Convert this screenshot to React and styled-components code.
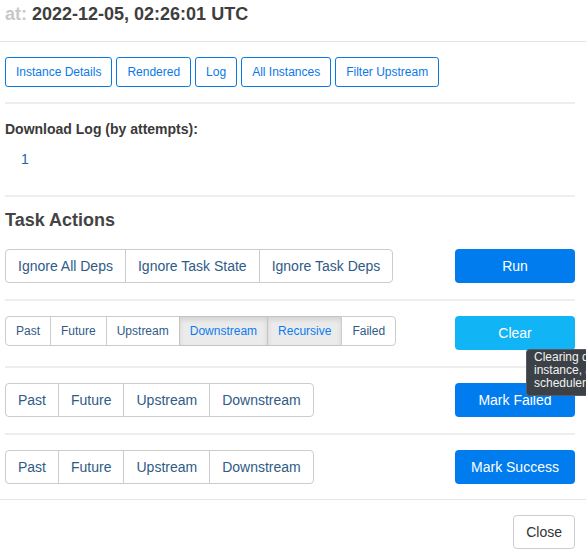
import React from "react";
import styled, { createGlobalStyle, css } from "styled-components";

const GlobalStyle = createGlobalStyle`
  html, body {
    margin: 0;
    padding: 0;
    overflow: hidden;
    background: #fff;
  }
  body {
    font-family: "Liberation Sans", Arial, sans-serif;
    color: #333;
  }
`;

const Header = styled.div`
  height: 41px;
  padding: 0 11px 0 5px;
  border-bottom: 1px solid #e5e5e5;
  font-size: 18px;
  font-weight: bold;
  line-height: 28px;
  color: #3e3e3e;
`;

const Muted = styled.span`
  color: #c8c8c8;
`;

const Body = styled.div`
  padding: 15px 11px 0 5px;
`;

const NavRow = styled.div`
  display: flex;
  gap: 4px;
`;

const OutlineButton = styled.button`
  font-family: inherit;
  font-size: 12px;
  line-height: 16px;
  padding: 6px 10px;
  color: #0a79e8;
  background: #fff;
  border: 1px solid #0a79e8;
  border-radius: 3px;
`;

const Rule = styled.div`
  height: 2px;
  background: #eeeeee;
  margin: ${(p) => p.$margin};
`;

const Label = styled.div`
  font-size: 14px;
  font-weight: bold;
  line-height: 18px;
  color: #3a3a3a;
`;

const AttemptLink = styled.a`
  display: block;
  margin-top: 11px;
  padding-left: 16px;
  font-size: 14px;
  line-height: 20px;
  color: #2266a8;
  text-decoration: none;
`;

const Heading = styled.h4`
  margin: 11px 0 2px;
  font-size: 18px;
  font-weight: bold;
  line-height: 24px;
  color: #444;
`;

const ActionRow = styled.div`
  display: flex;
  justify-content: space-between;
  align-items: flex-start;
  padding: 15px 0 ${(p) => (p.$last ? "15px" : "16px")};
  border-bottom: ${(p) => (p.$last ? "none" : "2px solid #eeeeee")};
`;

const Group = styled.div`
  display: flex;
`;

const GroupButton = styled.button`
  font-family: inherit;
  font-size: ${(p) => (p.$small ? "12px" : "14px")};
  line-height: ${(p) => (p.$small ? "16px" : "20px")};
  padding: ${(p) => (p.$small ? "6px 10px" : "6px 12px")};
  color: #2f5b86;
  background: #fff;
  border: 1px solid #cccccc;
  margin-left: -1px;
  border-radius: 0;

  &:first-child {
    margin-left: 0;
    border-radius: 4px 0 0 4px;
  }
  &:last-child {
    border-radius: 0 4px 4px 0;
  }

  ${(p) =>
    p.$active &&
    css`
      color: #0a7cf0;
      background: #ebebeb;
      border-color: #c4c4c4;
      box-shadow: inset 0 3px 5px rgba(0, 0, 0, 0.1);
    `}
`;

const ActionWrap = styled.div`
  position: relative;
`;

const ActionButton = styled.button`
  width: 120px;
  font-family: inherit;
  font-size: 14px;
  line-height: 20px;
  padding: 7px 12px;
  color: #fff;
  background: ${(p) => p.$color};
  border: none;
  border-radius: 4px;
`;

/* the tooltip runs into the window edge in the reference, so it is clipped there */
const Tooltip = styled.div`
  position: absolute;
  top: calc(100% - 1px);
  left: 71px;
  width: 52px;
  padding: 1px 0 5px 7px;
  font-size: 12px;
  line-height: 13px;
  white-space: nowrap;
  overflow: hidden;
  color: #f2f2f2;
  background: #3b4147;
  border: 1px solid #555b61;
  border-right: none;
  border-radius: 4px 0 0 4px;
  z-index: 2;

  &::before {
    content: "";
    position: absolute;
    top: -5px;
    left: 5px;
    border-left: 5px solid transparent;
    border-right: 5px solid transparent;
    border-bottom: 5px solid #3b4147;
  }
`;

const Footer = styled.div`
  display: flex;
  justify-content: flex-end;
  padding: 15px 11px;
  border-top: 1px solid #e5e5e5;
`;

const CloseButton = styled.button`
  font-family: inherit;
  font-size: 14px;
  line-height: 20px;
  padding: 6px 12px;
  color: #333;
  background: #fff;
  border: 1px solid #cccccc;
  border-radius: 4px;
`;

const navLinks = ["Instance Details", "Rendered", "Log", "All Instances", "Filter Upstream"];

const rows = [
  {
    small: false,
    items: [["Ignore All Deps"], ["Ignore Task State"], ["Ignore Task Deps"]],
    action: "Run",
    color: "#017cee",
  },
  {
    small: true,
    items: [
      ["Past"],
      ["Future"],
      ["Upstream"],
      ["Downstream", true],
      ["Recursive", true],
      ["Failed"],
    ],
    action: "Clear",
    color: "#11b4f5",
    tooltip: true,
  },
  {
    small: false,
    items: [["Past"], ["Future"], ["Upstream"], ["Downstream"]],
    action: "Mark Failed",
    color: "#017cee",
  },
  {
    small: false,
    items: [["Past"], ["Future"], ["Upstream"], ["Downstream"]],
    action: "Mark Success",
    color: "#017cee",
  },
];

export default function App() {
  return (
    <>
      <GlobalStyle />
      <Header>
        <Muted>at:</Muted> 2022-12-05, 02:26:01 UTC
      </Header>
      <Body>
        <NavRow>
          {navLinks.map((name) => (
            <OutlineButton key={name}>{name}</OutlineButton>
          ))}
        </NavRow>
        <Rule $margin="15px 0 16px" />
        <Label>Download Log (by attempts):</Label>
        <AttemptLink href="#">1</AttemptLink>
        <Rule $margin="26px 0 0" />
        <Heading>Task Actions</Heading>
        {rows.map((row, i) => (
          <ActionRow key={i} $last={i === rows.length - 1}>
            <Group>
              {row.items.map(([name, active]) => (
                <GroupButton key={name} $small={row.small} $active={active}>
                  {name}
                </GroupButton>
              ))}
            </Group>
            <ActionWrap>
              <ActionButton $color={row.color}>{row.action}</ActionButton>
              {row.tooltip && (
                <Tooltip>
                  Clearing d
                  <br />
                  instance, a
                  <br />
                  scheduler
                </Tooltip>
              )}
            </ActionWrap>
          </ActionRow>
        ))}
      </Body>
      <Footer>
        <CloseButton>Close</CloseButton>
      </Footer>
    </>
  );
}
